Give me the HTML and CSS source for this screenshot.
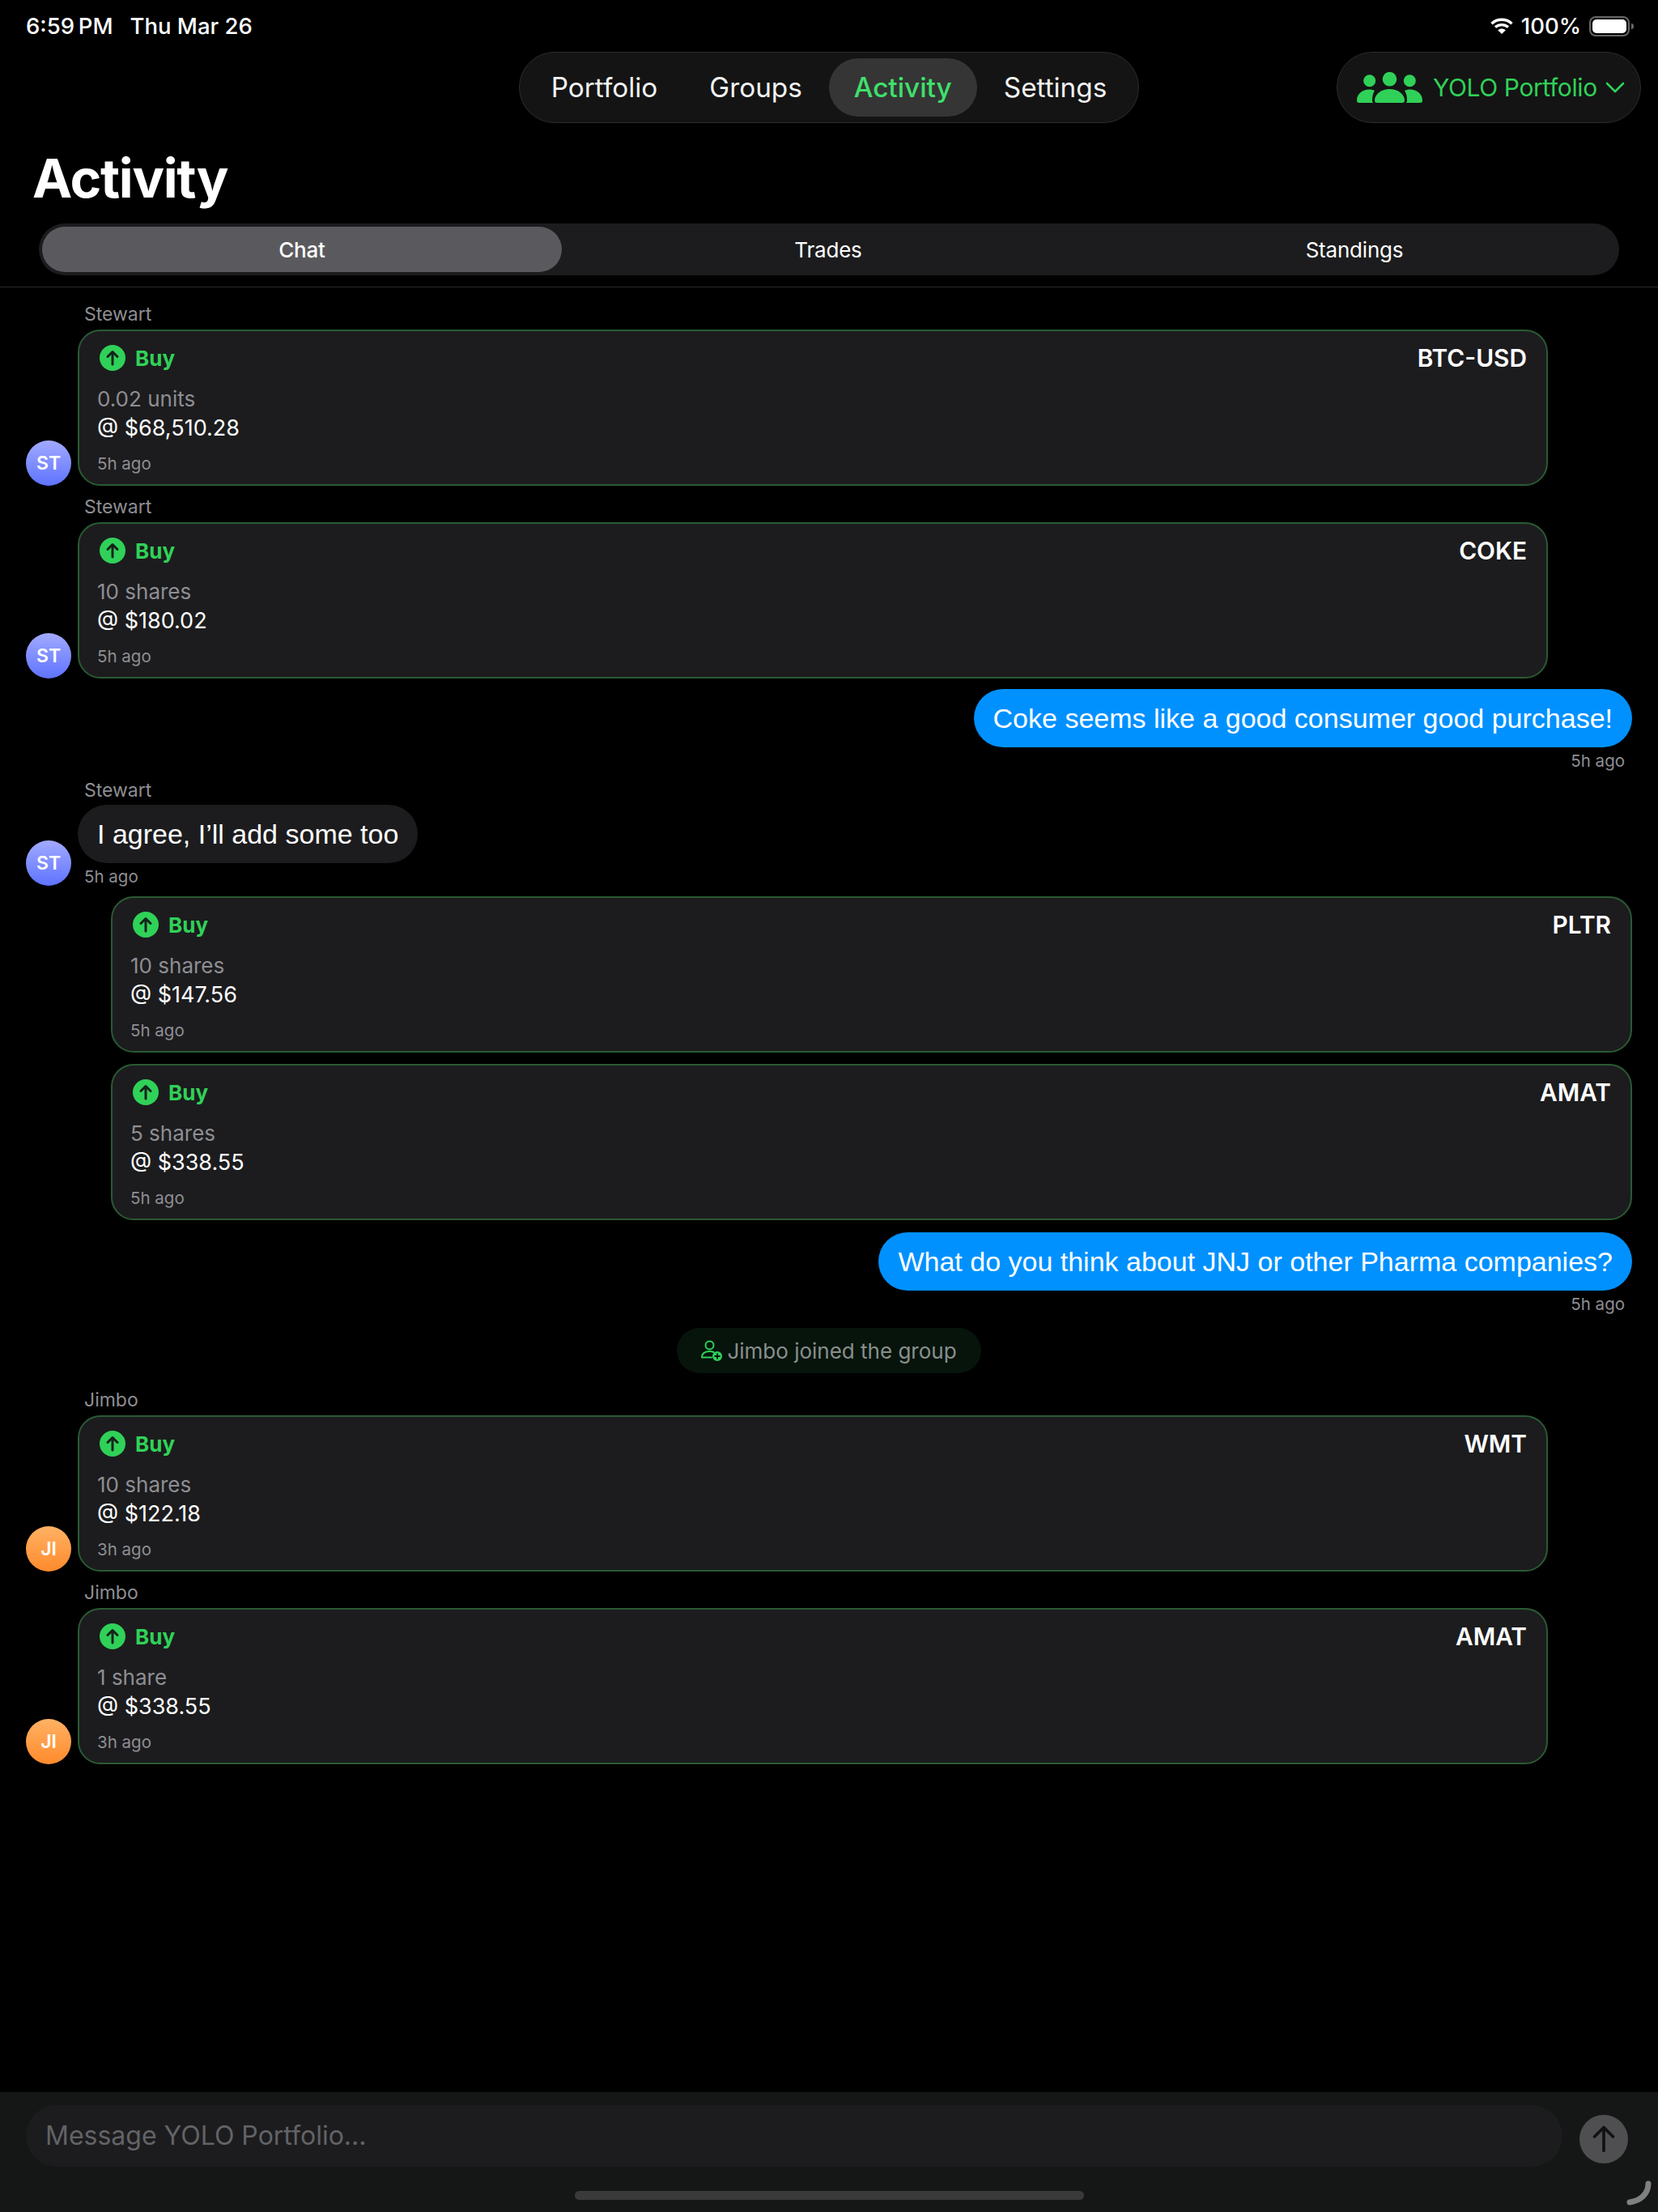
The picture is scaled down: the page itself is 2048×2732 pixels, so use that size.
FILE: index.html
```html
<!DOCTYPE html>
<html lang="en">
<head>
    <meta charset="UTF-8">
    <meta name="viewport" content="width=device-width, initial-scale=1.0">
    <title>Activity</title>
    <link rel="stylesheet" href="styles.css">
</head>
<body>
    <div class="app">
        <div class="status-bar">
            <div class="status-left"><span>6:59&#8201;PM</span><span>Thu Mar 26</span></div>
            <div class="status-right">
                <svg class="wifi" viewBox="0 0 28 20">
                    <path d="M1.5 7.2C8.5 .6 19.5 .6 26.5 7.2" fill="none" stroke="#fff" stroke-width="3.4"/>
                    <path d="M6 11.6C10.5 7.6 17.5 7.6 22 11.6" fill="none" stroke="#fff" stroke-width="3.4"/>
                    <path d="M14 20L9.2 15.2C11.8 12.9 16.2 12.9 18.8 15.2Z" fill="#fff"/>
                </svg>
                <span>100%</span>
                <div class="battery"><div class="battery-fill"></div></div>
                <div class="battery-nub"></div>
            </div>
        </div>

        <div class="top-row">
            <nav class="nav-pill">
                <div class="nav-item">Portfolio</div>
                <div class="nav-item">Groups</div>
                <div class="nav-item active">Activity</div>
                <div class="nav-item">Settings</div>
            </nav>
            <div class="group-pill">
                <svg class="group-icon" viewBox="0 0 81 38">
                    <circle cx="15.700" cy="10.700" r="7.500" fill="#30d158"/>
                    <circle cx="40.500" cy="8.700" r="8.800" fill="#30d158"/>
                    <circle cx="65.300" cy="10.700" r="7.500" fill="#30d158"/>
                    <path d="M0 35C0 27 7 21.500 15 21.500C18 21.500 20 22 22 23C20 26 19 30 19 35Q19 37 20 38H3Q0 38 0 35Z" fill="#30d158"/>
                    <path d="M22 35C22 27 31 21 40.500 21C50 21 59 27 59 35Q59 38 56 38H25Q22 38 22 35Z" fill="#30d158"/>
                    <path d="M81 35C81 27 74 21.500 66 21.500C63 21.500 61 22 59 23C61 26 62 30 62 35Q62 37 61 38H78Q81 38 81 35Z" fill="#30d158"/>
                </svg>
                <span>YOLO Portfolio</span>
                <svg class="chevron" viewBox="0 0 24 14"><path d="M2 2L12 12L22 2" fill="none" stroke="#30d158" stroke-width="2.6" stroke-linecap="round" stroke-linejoin="round"/></svg>
            </div>
        </div>

        <h1 class="page-title">Activity</h1>

        <div class="segments">
            <div class="segment selected">Chat</div>
            <div class="segment">Trades</div>
            <div class="segment">Standings</div>
        </div>

        <div class="chat">
            <div class="msg-row">
                <div class="avatar blue">ST</div>
                <div class="msg-body">
                    <div class="sender">Stewart</div>
                    <div class="trade-card">
                        <div class="trade-head">
                            <div class="buy"><svg class="buy-icon" viewBox="0 0 32 32"><circle cx="16" cy="16" r="16" fill="#30d158"/><path d="M16 24V9M10 14.500L16 8.500L22 14.500" fill="none" stroke="#15231a" stroke-width="3" stroke-linecap="round" stroke-linejoin="round"/></svg>Buy</div>
                            <div class="ticker">BTC-USD</div>
                        </div>
                        <div class="qty">0.02 units</div>
                        <div class="price">@ $68,510.28</div>
                        <div class="trade-time">5h ago</div>
                    </div>
                </div>
            </div>

            <div class="msg-row">
                <div class="avatar blue">ST</div>
                <div class="msg-body">
                    <div class="sender">Stewart</div>
                    <div class="trade-card">
                        <div class="trade-head">
                            <div class="buy"><svg class="buy-icon" viewBox="0 0 32 32"><circle cx="16" cy="16" r="16" fill="#30d158"/><path d="M16 24V9M10 14.500L16 8.500L22 14.500" fill="none" stroke="#15231a" stroke-width="3" stroke-linecap="round" stroke-linejoin="round"/></svg>Buy</div>
                            <div class="ticker">COKE</div>
                        </div>
                        <div class="qty">10 shares</div>
                        <div class="price">@ $180.02</div>
                        <div class="trade-time">5h ago</div>
                    </div>
                </div>
            </div>

            <div class="mine">
                <div class="bubble blue-bubble">Coke seems like a good consumer good purchase!</div>
                <div class="msg-time">5h ago</div>
            </div>

            <div class="msg-row text-row">
                <div class="avatar blue">ST</div>
                <div class="msg-body">
                    <div class="sender">Stewart</div>
                    <div class="bubble gray-bubble">I agree, I’ll add some too</div>
                    <div class="msg-time">5h ago</div>
                </div>
            </div>

            <div class="trade-card wide">
                <div class="trade-head">
                    <div class="buy"><svg class="buy-icon" viewBox="0 0 32 32"><circle cx="16" cy="16" r="16" fill="#30d158"/><path d="M16 24V9M10 14.500L16 8.500L22 14.500" fill="none" stroke="#15231a" stroke-width="3" stroke-linecap="round" stroke-linejoin="round"/></svg>Buy</div>
                    <div class="ticker">PLTR</div>
                </div>
                <div class="qty">10 shares</div>
                <div class="price">@ $147.56</div>
                <div class="trade-time">5h ago</div>
            </div>

            <div class="trade-card wide">
                <div class="trade-head">
                    <div class="buy"><svg class="buy-icon" viewBox="0 0 32 32"><circle cx="16" cy="16" r="16" fill="#30d158"/><path d="M16 24V9M10 14.500L16 8.500L22 14.500" fill="none" stroke="#15231a" stroke-width="3" stroke-linecap="round" stroke-linejoin="round"/></svg>Buy</div>
                    <div class="ticker">AMAT</div>
                </div>
                <div class="qty">5 shares</div>
                <div class="price">@ $338.55</div>
                <div class="trade-time">5h ago</div>
            </div>

            <div class="mine">
                <div class="bubble blue-bubble">What do you think about JNJ or other Pharma companies?</div>
                <div class="msg-time">5h ago</div>
            </div>

            <div class="system-msg">
                <div class="system-pill">
                    <svg class="join-icon" viewBox="0 0 26 26">
                        <circle cx="10.500" cy="6.500" r="5" fill="none" stroke="#30d158" stroke-width="2"/>
                        <path d="M1 21.500C1 16.500 5 14 10.500 14C12.500 14 14 14.300 15.500 15M1 21.500H13" fill="none" stroke="#30d158" stroke-width="2" stroke-linecap="round"/>
                        <circle cx="20" cy="20" r="6" fill="#30d158"/>
                        <path d="M20 16.500V23.500M16.500 20H23.500" stroke="#06140c" stroke-width="1.800"/>
                    </svg>
                    Jimbo joined the group
                </div>
            </div>

            <div class="msg-row">
                <div class="avatar orange">JI</div>
                <div class="msg-body">
                    <div class="sender">Jimbo</div>
                    <div class="trade-card">
                        <div class="trade-head">
                            <div class="buy"><svg class="buy-icon" viewBox="0 0 32 32"><circle cx="16" cy="16" r="16" fill="#30d158"/><path d="M16 24V9M10 14.500L16 8.500L22 14.500" fill="none" stroke="#15231a" stroke-width="3" stroke-linecap="round" stroke-linejoin="round"/></svg>Buy</div>
                            <div class="ticker">WMT</div>
                        </div>
                        <div class="qty">10 shares</div>
                        <div class="price">@ $122.18</div>
                        <div class="trade-time">3h ago</div>
                    </div>
                </div>
            </div>

            <div class="msg-row">
                <div class="avatar orange">JI</div>
                <div class="msg-body">
                    <div class="sender">Jimbo</div>
                    <div class="trade-card">
                        <div class="trade-head">
                            <div class="buy"><svg class="buy-icon" viewBox="0 0 32 32"><circle cx="16" cy="16" r="16" fill="#30d158"/><path d="M16 24V9M10 14.500L16 8.500L22 14.500" fill="none" stroke="#15231a" stroke-width="3" stroke-linecap="round" stroke-linejoin="round"/></svg>Buy</div>
                            <div class="ticker">AMAT</div>
                        </div>
                        <div class="qty">1 share</div>
                        <div class="price">@ $338.55</div>
                        <div class="trade-time">3h ago</div>
                    </div>
                </div>
            </div>
        </div>

        <div class="composer">
            <div class="composer-input">Message YOLO Portfolio...</div>
            <div class="send-btn">
                <svg viewBox="0 0 60 60"><path d="M30 44.500V16M18.500 27L30 15.500L41.500 27" fill="none" stroke="#111" stroke-width="3.600" stroke-linecap="round" stroke-linejoin="round"/></svg>
            </div>
            <div class="home-bar"></div>
            <svg class="corner-mark" viewBox="0 0 32 32"><path d="M28 5C28 17 19 26 5 28" fill="none" stroke="#808080" stroke-width="7" stroke-linecap="round"/></svg>
        </div>
    </div>
</body>
</html>
```
FILE: styles.css
```css
* {
    box-sizing: border-box;
}

body {
    margin: 0;
    background: #000;
    color: #fff;
    font-family: Inter, "Noto Sans", sans-serif;
}

.app {
    display: flex;
    flex-direction: column;
    width: 2048px;
    height: 2732px;
    overflow: hidden;
}

/* status bar */
.status-bar {
    display: flex;
    justify-content: space-between;
    align-items: center;
    height: 64px;
    padding: 0 30px 0 32px;
    font-size: 27.5px;
    font-weight: 500;
}

.status-left {
    display: flex;
    gap: 21px;
}

.status-right {
    display: flex;
    align-items: center;
}

.wifi {
    width: 28px;
    height: 20px;
    margin-right: 10px;
}

.battery {
    width: 50px;
    height: 25px;
    margin-left: 10px;
    padding: 2px;
    border: 2px solid #666;
    border-radius: 8px;
}

.battery-fill {
    height: 100%;
    background: #fff;
    border-radius: 5px;
}

.battery-nub {
    width: 3px;
    height: 7px;
    margin-left: 2px;
    background: #666;
    border-radius: 0 3px 3px 0;
}

/* top nav */
.top-row {
    display: grid;
    grid-template-columns: 1fr auto 1fr;
}

.nav-pill {
    grid-column: 2;
    display: flex;
    align-items: center;
    gap: 2px;
    height: 88px;
    padding: 0 8px;
    background: #141414;
    border: 1px solid #2c2c2c;
    border-radius: 44px;
}

.nav-item {
    display: flex;
    align-items: center;
    height: 72px;
    padding: 0 31px;
    font-size: 33.3px;
    font-weight: 400;
    color: #f2f2f2;
    border-radius: 36px;
}

.nav-item.active {
    color: #3fe06c;
    font-weight: 500;
    background: #353535;
}

.group-pill {
    grid-column: 3;
    justify-self: end;
    display: flex;
    align-items: center;
    width: 376px;
    height: 88px;
    margin-right: 21px;
    padding-left: 24px;
    font-size: 30px;
    letter-spacing: -0.4px;
    color: #30d158;
    background: #141414;
    border: 1px solid #2c2c2c;
    border-radius: 44px;
}

.group-icon {
    width: 81px;
    height: 38px;
    margin-right: 13px;
}

.chevron {
    width: 24px;
    height: 14px;
    margin-left: 10px;
}

.page-title {
    margin: 0;
    padding: 28px 0 0 40px;
    height: 124px;
    font-size: 66px;
    line-height: 80px;
    letter-spacing: -1.3px;
    font-weight: 700;
}

.segments {
    display: grid;
    grid-template-columns: repeat(3, 650px);
    align-items: center;
    width: 1952px;
    height: 64px;
    margin-left: 48px;
    background: #1c1c1e;
    border-radius: 32px;
}

.segment {
    display: flex;
    justify-content: center;
    align-items: center;
    height: 56px;
    margin: 0 4px;
    font-size: 26px;
    letter-spacing: -0.2px;
    font-weight: 400;
    border-radius: 28px;
}

.segment.selected {
    background: #5a5a5e;
    font-weight: 500;
}

/* chat list */
.chat {
    flex: 1;
    display: flex;
    flex-direction: column;
    gap: 12px;
    margin-top: 14px;
    padding: 19px 32px 0;
    border-top: 1px solid #2a2a2a;
}

.msg-row {
    display: flex;
    align-items: flex-end;
    gap: 8px;
    margin-right: 104px;
}

.avatar {
    flex: none;
    display: flex;
    justify-content: center;
    align-items: center;
    width: 56px;
    height: 56px;
    font-size: 23px;
    font-weight: 600;
    border-radius: 50%;
}

.avatar.blue {
    background: linear-gradient(#a2aaff, #5f73ff);
}

.avatar.orange {
    background: linear-gradient(#ffb264, #ff8a2c);
}

.msg-body {
    flex: 1;
}

.sender {
    height: 28px;
    margin: 0 0 5px 8px;
    font-size: 23px;
    line-height: 28px;
    color: #8e8e93;
}

.trade-card {
    height: 193px;
    padding: 16px 24px 0 22px;
    background: #1c1c1e;
    border: 2px solid #2a5a34;
    border-radius: 28px;
}

.trade-card.wide {
    margin-left: 105px;
    margin-bottom: 2px;
}

.trade-head {
    display: flex;
    justify-content: space-between;
    align-items: center;
    height: 34px;
    margin-bottom: 16px;
}

.buy {
    display: flex;
    align-items: center;
    gap: 12px;
    font-size: 26px;
    font-weight: 700;
    color: #30d158;
}

.buy-icon {
    width: 32px;
    height: 32px;
    margin-left: 3px;
}

.ticker {
    font-size: 29.8px;
    font-weight: 600;
}

.qty {
    font-size: 26px;
    line-height: 36px;
    color: #8e8e93;
}

.price {
    font-size: 27px;
    line-height: 36px;
}

.trade-time {
    margin-top: 13px;
    font-size: 20.5px;
    line-height: 26px;
    color: #8e8e93;
}

.bubble {
    display: flex;
    align-items: center;
    height: 72px;
    padding: 0 24px;
    font-family: "Liberation Sans", Arial, sans-serif;
    font-size: 34px;
    border-radius: 36px;
}

.blue-bubble {
    background: #0091ff;
}

.gray-bubble {
    width: fit-content;
    background: #1c1c1e;
}

.msg-time {
    height: 26px;
    margin-top: 4px;
    font-size: 20.5px;
    line-height: 26px;
    color: #8e8e93;
}

.mine {
    display: flex;
    flex-direction: column;
    align-items: flex-end;
    margin-top: 1px;
    margin-bottom: -3px;
}

.mine .msg-time {
    padding-right: 9px;
}

.text-row {
    align-items: flex-start;
    margin-bottom: -1px;
}

.text-row .sender {
    margin-bottom: 4px;
}

.text-row .avatar {
    margin-top: 76px;
}

.text-row .msg-time {
    padding-left: 8px;
}

.system-msg {
    display: flex;
    justify-content: center;
    margin: 7px 0 7px;
}

.system-pill {
    display: flex;
    align-items: center;
    gap: 6px;
    height: 56px;
    padding: 0 30px;
    font-size: 26px;
    color: #8a8f8c;
    background: #06140c;
    border-radius: 28px;
}

.join-icon {
    width: 26px;
    height: 26px;
}

/* bottom bar */
.composer {
    position: relative;
    display: flex;
    align-items: flex-start;
    height: 148px;
    padding: 16px 37px 0 32px;
    background: #151717;
}

.composer-input {
    flex: 1;
    display: flex;
    align-items: center;
    height: 76px;
    padding: 0 0 2px 24px;
    font-size: 32px;
    color: #636366;
    background: #1c1c1e;
    border-radius: 38px;
}

.send-btn {
    width: 60px;
    height: 60px;
    margin: 12px 0 0 21px;
    background: #4f4f52;
    border-radius: 50%;
}

.send-btn svg {
    display: block;
}

.home-bar {
    position: absolute;
    left: 710px;
    top: 122px;
    width: 629px;
    height: 11px;
    background: #3a3a3a;
    border-radius: 6px;
}

.corner-mark {
    position: absolute;
    left: 2008px;
    top: 108px;
    width: 32px;
    height: 32px;
}
```
